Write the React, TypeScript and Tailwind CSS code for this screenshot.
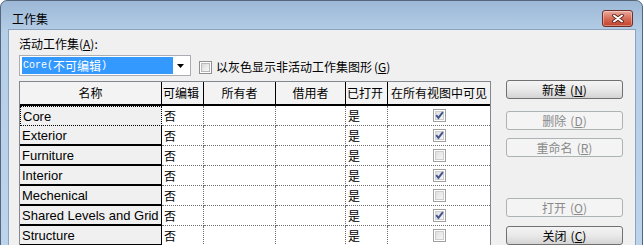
import React from "react";

const CJK = { fontFamily: "'Noto Sans CJK SC', sans-serif" } as React.CSSProperties;
const LAT = { fontFamily: "'Liberation Sans', 'Noto Sans CJK SC', sans-serif" } as React.CSSProperties;

function Box({ checked, disabled }: { checked?: boolean; disabled?: boolean }) {
  const id = disabled ? "gd" : "ge";
  return (
    <svg width="13" height="13" viewBox="0 0 13 13" className="block shrink-0">
      <defs>
        <linearGradient id={id} x1="0" y1="0" x2="1" y2="1">
          <stop offset="0" stopColor={disabled ? "#dedede" : "#d8d8d8"} />
          <stop offset="1" stopColor={disabled ? "#f7f7f7" : "#fbfbfb"} />
        </linearGradient>
      </defs>
      <rect x="0.5" y="0.5" width="12" height="12" fill="#fff" stroke={disabled ? "#a0a0a0" : "#8e8f8f"} />
      <rect x="2.5" y="2.5" width="8" height="8" fill={`url(#${id})`} stroke={disabled ? "#cdcdcd" : "#b9b9b9"} />
      {checked && (
        <path d="M3.2 6.2 L5.4 8.9 L9.9 3.2" fill="none" stroke={disabled ? "#41558e" : "#2e4a8a"} strokeWidth="1.9" />
      )}
    </svg>
  );
}

function Btn({ label, acc, disabled, mt }: { label: string; acc: string; disabled?: boolean; mt: string }) {
  return (
    <div
      className={`${mt} w-[117px] h-[19px] rounded-[3px] border flex items-center justify-center text-[12px] leading-[14px] ${
        disabled
          ? "border-[#adb2b5] bg-[#f4f4f4] text-[#8a8a8a]"
          : "border-[#707070] bg-gradient-to-b from-[#f4f4f4] via-[#e9e9e9] to-[#d4d4d4] text-black"
      }`}
      style={CJK}
    >
      {label}
      <span className="ml-[4px]">
        (<span className="underline">{acc}</span>)
      </span>
    </div>
  );
}

const rows: { name: string; vis: boolean }[] = [
  { name: "Core", vis: true },
  { name: "Exterior", vis: true },
  { name: "Furniture", vis: false },
  { name: "Interior", vis: true },
  { name: "Mechenical", vis: false },
  { name: "Shared Levels and Grid", vis: true },
  { name: "Structure", vis: false },
];

const headers = ["名称", "可编辑", "所有者", "借用者", "已打开", "在所有视图中可见"];

export default function App() {
  return (
    <div className="w-[643px] h-[245px] overflow-hidden bg-white">
      <div className="w-[643px] h-[270px] rounded-t-[7px] border border-[#56677c] bg-gradient-to-b from-[#9cb8d6] via-[#b6cfe8] via-[12%] to-[#bcd4ec] flex flex-col">
        {/* title bar */}
        <div className="h-[28px] flex items-start justify-between shrink-0">
          <div className="mt-[11px] ml-[11px] text-[12px] leading-[14px] text-black" style={CJK}>
            工作集
          </div>
          <div className="mt-[9px] mr-[9px] w-[31px] h-[17px] rounded-[3px] border border-[#6e2f28] bg-gradient-to-b from-[#e9ab9f] via-[#d66d58] via-[50%] to-[#c23f29] flex items-center justify-center shadow-[inset_0_0_0_1px_rgba(255,255,255,0.35)]">
            <svg width="12" height="9" viewBox="0 0 12 9">
              <path d="M2 1.5 L10 7.5 M10 1.5 L2 7.5" stroke="#5a1e17" strokeWidth="3.6" strokeLinecap="round" />
              <path d="M2 1.5 L10 7.5 M10 1.5 L2 7.5" stroke="#ffffff" strokeWidth="2" strokeLinecap="round" />
            </svg>
          </div>
        </div>
        {/* content */}
        <div className="flex-1 ml-[7px] mr-[6px] border border-[#8da3bd] bg-[#f0f0f0] text-black">
          <div className="pt-[7px] pl-[10px] h-[21px] text-[12px] leading-[14px]" style={CJK}>
            活动工作集(<span className="underline">A</span>):
          </div>
          <div className="mt-[4px] pl-[10px] flex items-center h-[21px]">
            <div className="w-[172px] h-[21px] border border-[#abadb3] bg-white flex items-center pl-[2px] pr-[3px]">
              <div className="w-[151px] h-[17px] bg-[#3399ff] text-white flex items-center pl-[1px] text-[12px] leading-[14px]" style={CJK}>
                <span className="text-[10px]" style={{ fontFamily: "'Liberation Mono', monospace" }}>
                  Core(
                </span>
                不可编辑
                <span className="text-[10px]" style={{ fontFamily: "'Liberation Mono', monospace" }}>
                  )
                </span>
              </div>
              <div className="flex-1 flex justify-center">
                <svg width="7" height="4" viewBox="0 0 7 4">
                  <path d="M0 0 H7 L3.5 4 Z" fill="#000" />
                </svg>
              </div>
            </div>
            <div className="ml-[8px] mt-[3px] flex items-center">
              <Box />
              <span className="ml-[4px] text-[12px] leading-[14px]" style={CJK}>
                以灰色显示非活动工作集图形
                <span className="ml-[2px]">
                  (<span className="underline">G</span>)
                </span>
              </span>
            </div>
          </div>
          {/* main row */}
          <div className="mt-[4px] pl-[10px] flex items-start">
            <div className="mt-[1px] w-[472px] border border-[#828790] bg-white">
              <div className="grid grid-cols-[142px_42px_72px_70px_42px_102px]">
                {headers.map((h, i) => (
                  <div
                    key={h}
                    className={`h-[24px] bg-[#f3f3f3] border-b-2 border-b-black ${
                      i < 5 ? "border-r border-r-black" : ""
                    } flex items-center ${i === 1 || i === 4 ? "justify-start pl-[1px]" : "justify-center"} text-[12px] leading-[14px]`}
                    style={CJK}
                  >
                    {h}
                  </div>
                ))}
                {rows.map((r, ri) => (
                  <React.Fragment key={r.name}>
                    <div
                      className={`h-[20px] bg-[#f0f0f0] flex items-center pl-[2px] text-[13px] leading-[15px] whitespace-nowrap ${
                        ri === 0
                          ? "border border-dotted border-black"
                          : "border-r border-r-black border-b-2 border-b-black"
                      }`}
                      style={LAT}
                    >
                      {r.name}
                    </div>
                    <div
                      className="h-[20px] border-r border-b border-dotted border-[#6d6d6d] flex items-center pl-[2px] text-[12px] leading-[14px]"
                      style={CJK}
                    >
                      否
                    </div>
                    <div className="h-[20px] border-r border-b border-dotted border-[#6d6d6d]" />
                    <div className="h-[20px] border-r border-b border-dotted border-[#6d6d6d]" />
                    <div
                      className="h-[20px] border-r border-b border-dotted border-[#6d6d6d] flex items-center pl-[2px] text-[12px] leading-[14px]"
                      style={CJK}
                    >
                      是
                    </div>
                    <div className="h-[20px] border-b border-dotted border-[#6d6d6d] flex items-center justify-center">
                      <Box checked={r.vis} disabled />
                    </div>
                  </React.Fragment>
                ))}
              </div>
            </div>
            <div className="ml-[15px] flex flex-col">
              <Btn label="新建" acc="N" mt="mt-0" />
              <Btn label="删除" acc="D" disabled mt="mt-[12px]" />
              <Btn label="重命名" acc="R" disabled mt="mt-[8px]" />
              <Btn label="打开" acc="O" disabled mt="mt-[41px]" />
              <Btn label="关闭" acc="C" mt="mt-[9px]" />
            </div>
          </div>
        </div>
      </div>
    </div>
  );
}
